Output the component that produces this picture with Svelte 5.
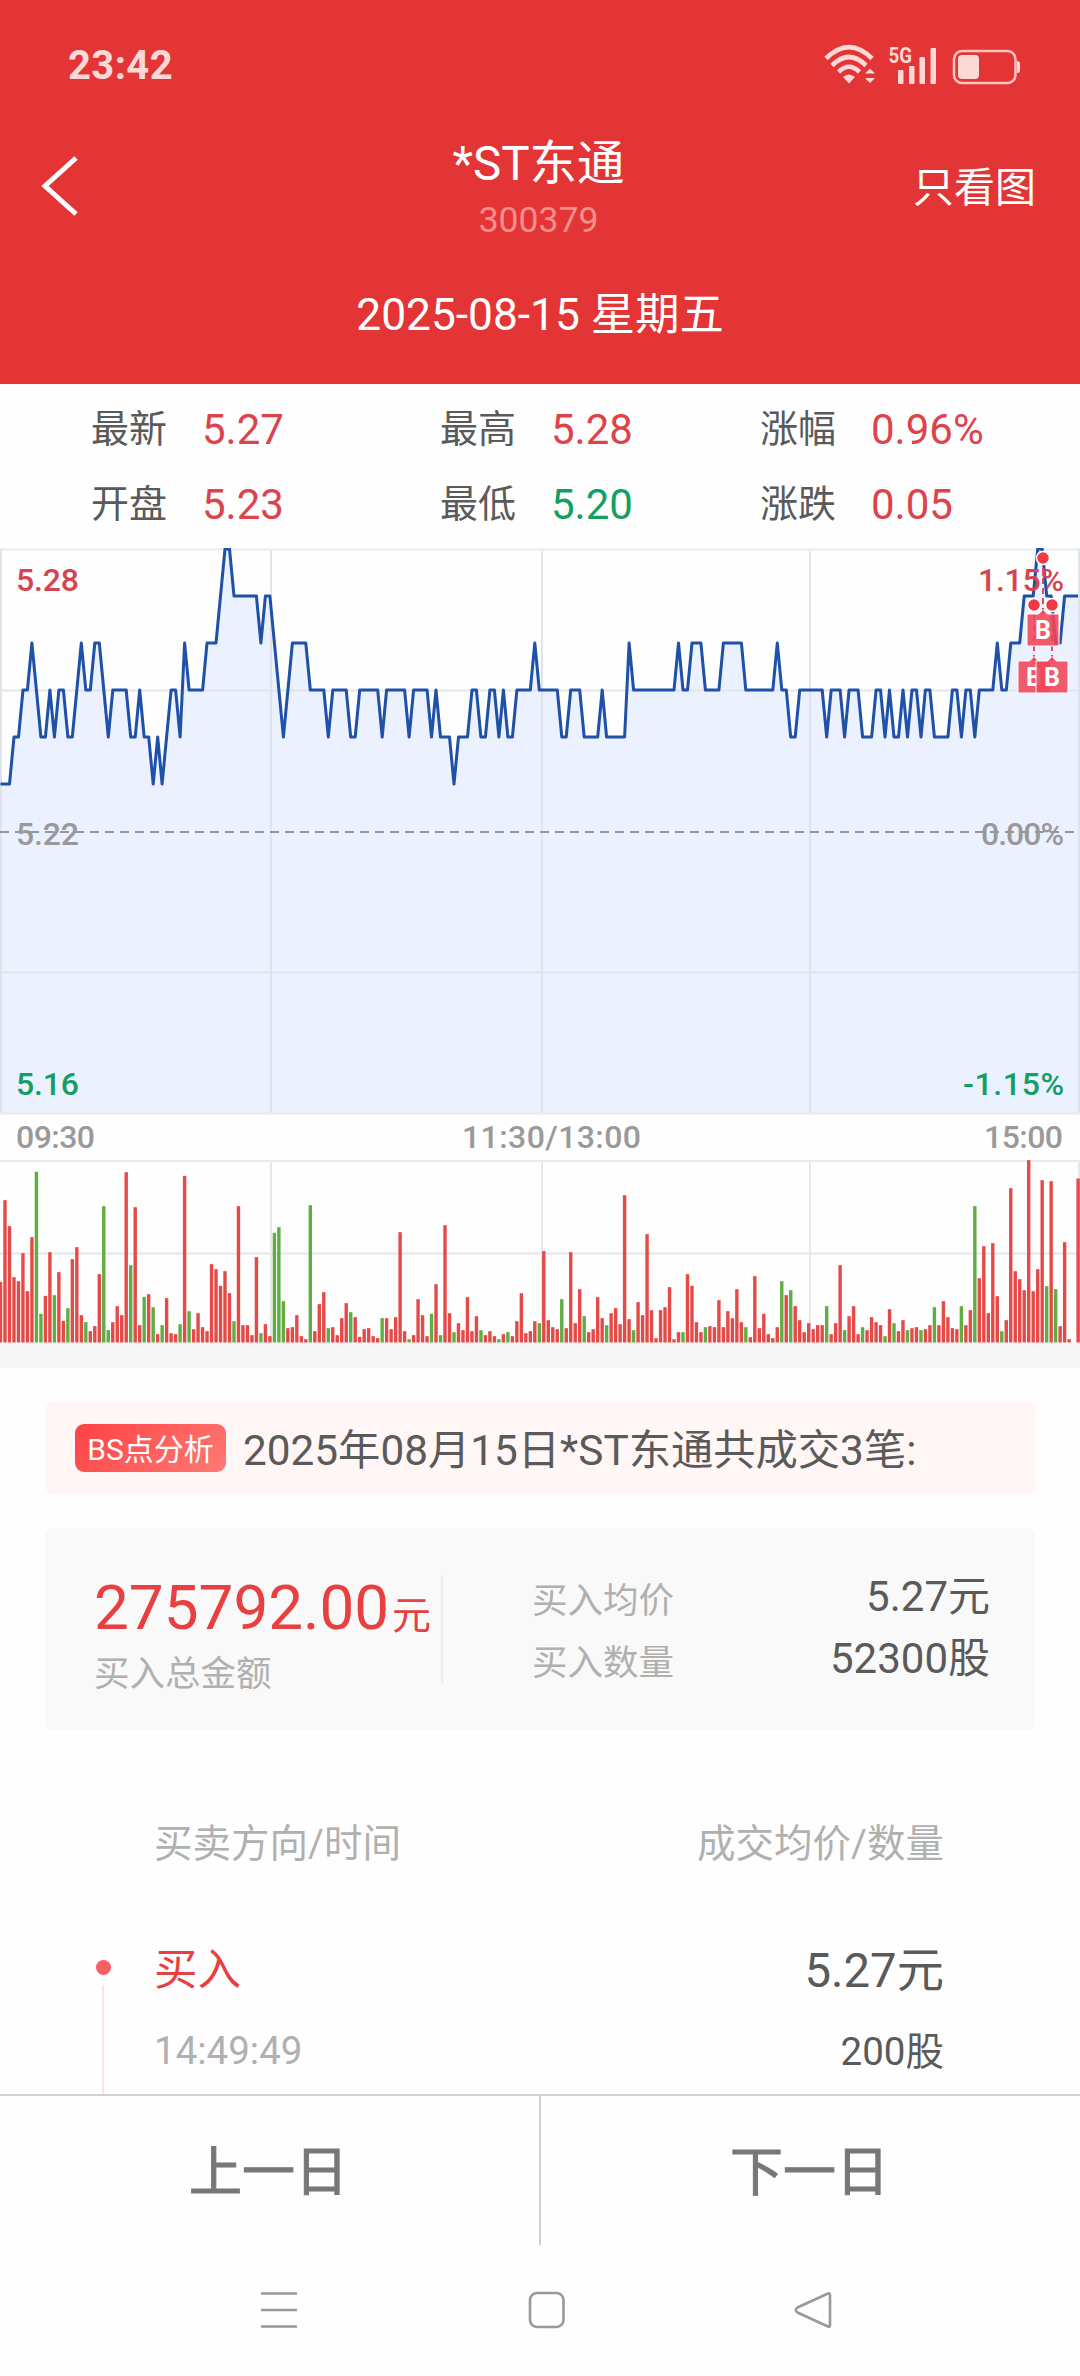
<script lang="ts">
  const stats = [
    { label: "最新", value: "5.27" },
    { label: "最高", value: "5.28" },
    { label: "涨幅", value: "0.96%" },
    { label: "开盘", value: "5.23" },
    { label: "最低", value: "5.20", down: true },
    { label: "涨跌", value: "0.05" },
  ];

  // turning points of the price line: [minute, last digit of 5.2x]
  const turns = [
    [0, 3], [2, 3], [3, 4], [4, 4], [5, 5], [6, 5], [7, 6], [9, 4], [10, 4], [11, 5],
    [12, 4], [13, 5], [14, 5], [15, 4], [16, 4], [18, 6], [19, 5], [20, 5], [21, 6], [22, 6],
    [24, 4], [25, 5], [28, 5], [29, 4], [30, 4], [31, 5], [32, 4], [33, 4], [34, 3], [35, 4],
    [36, 3], [38, 5], [39, 5], [40, 4], [41, 6], [42, 5], [45, 5], [46, 6], [48, 6], [50, 8],
    [51, 8], [52, 7], [57, 7], [58, 6], [59, 7], [60, 7], [63, 4], [65, 6], [68, 6], [69, 5],
    [72, 5], [73, 4], [74, 5], [77, 5], [78, 4], [79, 4], [80, 5], [84, 5], [85, 4], [86, 5],
    [90, 5], [91, 4], [92, 5], [95, 5], [96, 4], [97, 5], [98, 4], [100, 4], [101, 3], [102, 4],
    [104, 4], [105, 5], [106, 5], [107, 4], [108, 4], [109, 5], [110, 5], [111, 4], [112, 5], [113, 4],
    [114, 4], [115, 5], [118, 5], [119, 6], [120, 5], [124, 5], [125, 4], [126, 4], [127, 5], [129, 5],
    [130, 4], [133, 4], [134, 5], [135, 4], [139, 4], [140, 6], [141, 5], [150, 5], [151, 6], [152, 5],
    [153, 5], [154, 6], [156, 6], [157, 5], [160, 5], [161, 6], [165, 6], [166, 5], [172, 5], [173, 6],
    [174, 5], [175, 5], [176, 4], [177, 4], [178, 5], [183, 5], [184, 4], [185, 5], [187, 5], [188, 4],
    [189, 5], [191, 5], [192, 4], [194, 4], [195, 5], [196, 5], [197, 4], [198, 5], [199, 4], [200, 4],
    [201, 5], [202, 4], [203, 5], [204, 5], [205, 4], [206, 5], [207, 5], [208, 4], [211, 4], [212, 5],
    [213, 5], [214, 4], [215, 5], [216, 5], [217, 4], [218, 5], [221, 5], [222, 6], [223, 5], [224, 5],
    [225, 6], [227, 6], [228, 7], [230, 7], [231, 8], [232, 8], [233, 7], [234, 7], [235, 6], [236, 6],
    [237, 7], [240, 7],
  ];

  // volume per minute, negative when the price ticked down
  const volumes = [
    182, 427, 349, 196, 184, 268, 154, 316, -512, -86, 140, 271, -142, 211, 65, -103, 250, 286, 82, -61,
    34, 49, 205, -409, -37, 61, 109, 82, 511, -232, 406, 52, -137, 145, -106, 25, -52, 133, 28, 25,
    -55, 500, -94, 40, 88, 46, 34, 235, 220, 170, 214, 148, -64, 409, 52, 52, 22, 256, -28, 55,
    19, -329, -346, -124, 43, 46, 82, 19, 10, -412, 34, 115, 151, -43, 46, 22, 73, 118, -91, 76,
    17, 40, 43, 19, 13, -73, 73, 40, 76, 331, 34, -10, 22, 130, 82, 19, -86, 175, -22, 352,
    88, -31, 58, 37, 136, 34, 79, -37, 22, 34, 19, -10, 25, -31, 19, 64, 148, 28, 34, 64,
    -58, 274, 67, 46, 40, -130, 43, 271, 58, 160, -79, 31, 40, 136, 73, -52, 88, 103, 55, 442,
    70, -37, 121, 82, 325, 97, 13, 97, 106, 166, 10, 31, -31, 205, 170, 61, 31, -46, 49, 46,
    127, 46, 94, 73, 160, 61, -46, 16, 199, 43, 86, 25, 13, 46, -184, 142, -157, 109, 67, 31,
    58, 40, 52, 52, -109, 25, 58, 232, -37, 79, 109, 25, -46, 37, 76, 61, 52, -19, 100, -58,
    34, 67, -37, 43, 46, -37, 40, 52, -106, 52, 124, 76, 43, 40, -109, 52, 97, -409, 193, 289,
    88, 298, 139, -34, 67, 463, 214, 190, 157, 547, 154, 220, 487, -169, 484, -160, 49, 301, 10, 0,
    492,
  ];

  const markers = [
    { x: 1034, y: 605 },
    { x: 1052, y: 605 },
    { x: 1043, y: 558 },
  ];

  const minuteX = (minute: number) => 0.5 + minute * 4.49;
  const priceY = (digit: number) => 1 + (8 - digit) * 47;

  const line = turns.map(([m, d]) => `${minuteX(m).toFixed(1)},${priceY(d)}`).join(" ");
  const area = `0,565 ${line} 1080,${priceY(7)} 1080,565`;
</script>

<header>
  <div class="status">
    <span class="clock">23:42</span>
    <svg width="200" height="44" viewBox="0 0 200 44" fill="#fcd8d6">
      <g fill="none" stroke="#fcd8d6" stroke-width="4.6">
        <path d="M2 15.500Q25 -7.500 48 15.500" />
        <path d="M8 22.500Q25 5.500 42 22.500" />
        <path d="M14.500 29Q25 18.500 35.500 29" />
      </g>
      <path d="M19 34Q25 29 31 34L25 40.500Z" />
      <path d="M41 30.500L46 25.500L51 30.500ZM41 35L46 40L51 35Z" />
      <text x="64.500" y="19.500" class="network" textLength="23.500" lengthAdjust="spacingAndGlyphs">5G</text>
      <rect x="74" y="27" width="5.500" height="14" rx="1" />
      <rect x="85" y="23" width="5.500" height="18" rx="1" />
      <rect x="95.500" y="14" width="5.500" height="27" rx="1" />
      <rect x="106.500" y="5" width="5.500" height="36" rx="1" />
      <rect x="130" y="8" width="61.500" height="32" rx="8" fill="none" stroke="#fcc4c0" stroke-width="2.500" />
      <rect x="134" y="12" width="21" height="24" rx="4" />
      <path d="M193 18q3 0 3 3v6q0 3 -3 3z" />
    </svg>
  </div>
  <div class="title-bar">
    <svg width="40" height="62" viewBox="0 0 40 62">
      <path d="M35 3L4 31L35 59" fill="none" stroke="#fff" stroke-width="5" />
    </svg>
    <div class="stock">
      <h1>*ST东通</h1>
      <span>300379</span>
    </div>
    <span class="only-chart">只看图</span>
  </div>
  <div class="date">2025-08-15 星期五</div>
</header>

<section class="stats">
  {#each stats as stat}
    <div class="stat">
      <span>{stat.label}</span>
      <b class:down={stat.down}>{stat.value}</b>
    </div>
  {/each}
</section>

<svg class="chart" width="1080" height="795" viewBox="0 0 1080 795">
  <polygon points={area} fill="#ebf1fe" />
  <g stroke="#dfe3ea" stroke-width="2">
    <path d="M0 1.500H1080M0 565.500H1080M0 613H1080" stroke="#e8eaec" />
    <path d="M0 142.500H1080M0 424.500H1080M0 705.500H1080" stroke="#e2e5ea" />
    <path d="M1 1V565M271 3V565M542 3V565M810 3V565M1079 1V565" />
    <path d="M271 613V794M542 613V794M810 613V794M1079 613V794" stroke="#e8e8ea" />
  </g>
  <path d="M0 284H1080" stroke="#8f98a5" stroke-width="2" stroke-dasharray="9 6" />
  <polyline points={line} fill="none" stroke="#1f51a8" stroke-width="3" stroke-linejoin="round" />

  <g class="axis">
    <text class="up" x="16" y="43" textLength="63">5.28</text>
    <text x="16" y="297" textLength="63">5.22</text>
    <text class="down" x="16" y="547" textLength="63">5.16</text>
    <text class="up" x="978" y="43" textLength="86">1.15%</text>
    <text x="981" y="297" textLength="83">0.00%</text>
    <text class="down" x="963" y="547" textLength="101">-1.15%</text>
    <text x="16" y="600" textLength="79">09:30</text>
    <text x="462" y="600" textLength="179">11:30/13:00</text>
    <text x="984" y="600" textLength="79">15:00</text>
  </g>

  {#each markers as m}
    <g transform="translate({m.x} {m.y - 548})">
      <path d="M0 10V60" stroke="#e04a5c" stroke-width="2" stroke-dasharray="6 4" />
      <circle r="6.500" fill="#ee3a45" stroke="#fff" stroke-width="1.500" />
      <path
        d="M-16 56H-4.500L0 51.500L4.500 56H16V88H-16Z"
        fill="#f04458"
        fill-opacity="0.88"
        stroke="#fff"
        stroke-width="1"
      />
      <text class="buy" y="81">B</text>
    </g>
  {/each}

  {#each volumes as volume, i}
    <rect
      x={minuteX(i) - 1.7}
      y={794.5 - Math.abs(volume) / 3}
      width="3.4"
      height={Math.abs(volume) / 3}
      fill={volume < 0 ? "#60ad43" : "#e44a48"}
    />
  {/each}
</svg>

<div class="band"></div>

<main>
  <div class="analysis">
    <span class="tag">BS点分析</span>
    <span class="headline">2025年08月15日*ST东通共成交3笔:</span>
  </div>

  <div class="summary">
    <div class="total">
      <div class="amount">275792.00<small>元</small></div>
      <div class="muted">买入总金额</div>
    </div>
    <div class="detail">
      <div><span class="muted">买入均价</span><span>5.27元</span></div>
      <div><span class="muted">买入数量</span><span>52300股</span></div>
    </div>
  </div>

  <div class="trades">
    <div class="row head"><span>买卖方向/时间</span><span>成交均价/数量</span></div>
    <div class="trade">
      <div class="timeline"><i></i></div>
      <div class="trade-body">
        <div class="row side"><span>买入</span><b>5.27元</b></div>
        <div class="row time"><span>14:49:49</span><b>200股</b></div>
      </div>
    </div>
  </div>
</main>

<footer>
  <button>上一日</button>
  <button>下一日</button>
</footer>

<nav>
  <svg width="38" height="38" viewBox="0 0 38 38">
    <path d="M1 2.500H37M1 19H37M1 35.500H37" />
  </svg>
  <svg width="38" height="38" viewBox="0 0 38 38">
    <rect x="3" y="2" width="33.500" height="34" rx="7" />
  </svg>
  <svg width="38" height="38" viewBox="0 0 38 38">
    <path d="M34 2.500Q36 2 36 4V34Q36 36.500 34 35.500L3.500 21.500Q0 19 3.500 16.500Z" />
  </svg>
</nav>

<style>
  :global(body) {
    width: 1080px;
    background: #fefefe;
    font-family: Roboto, "Noto Sans CJK SC", sans-serif;
    color: #5a5a5a;
  }

  header {
    height: 384px;
    background: #e33536;
    color: #fff;
  }

  .status {
    display: flex;
    justify-content: space-between;
    align-items: center;
    height: 130px;
    padding: 0 56px 0 68px;
    box-sizing: border-box;
  }

  .clock {
    font-size: 40px;
    font-weight: 700;
    letter-spacing: 0.4px;
    color: #fcd8d6;
  }

  .network {
    font-size: 22.5px;
    font-weight: 700;
  }

  .title-bar {
    display: grid;
    grid-template-columns: 200px 1fr 200px;
    align-items: center;
    height: 115px;
    margin-top: -3px;
    padding: 0 44px 0 41px;
  }

  .stock {
    padding-top: 5px;
    text-align: center;
  }

  h1 {
    margin: 0;
    font-size: 47.5px;
    font-weight: 400;
    line-height: 64px;
  }

  .stock span {
    display: block;
    font-size: 35.5px;
    line-height: 49px;
    color: #f48f8b;
  }

  .only-chart {
    padding-top: 4px;
    text-align: right;
    font-size: 41px;
    line-height: 60px;
  }

  .date {
    height: 142px;
    line-height: 146px;
    text-align: center;
    font-size: 44.3px;
  }

  .stats {
    display: grid;
    grid-template-columns: 349px 320px 1fr;
    grid-auto-rows: 75px;
    height: 165px;
    padding: 8px 0 0 91px;
    box-sizing: border-box;
  }

  .stat {
    display: flex;
    align-items: center;
    gap: 35px;
    font-size: 38px;
  }

  .stat span {
    padding-bottom: 8px;
  }

  .stat b {
    font-size: 42px;
    font-weight: 400;
    color: #dd434b;
  }

  .stat b.down {
    color: #149e62;
  }

  .chart {
    display: block;
    margin-top: -1px;
  }

  .axis {
    font-size: 32px;
    font-weight: 500;
    fill: #999;
  }

  .axis .up {
    fill: #d5454f;
  }

  .axis .down {
    fill: #149e62;
  }

  .buy {
    font-size: 25px;
    font-weight: 700;
    fill: #fff;
    text-anchor: middle;
  }

  .band {
    height: 25px;
    background: #f6f6f6;
  }

  main {
    height: 726px;
    padding: 34px 45px 0;
    box-sizing: border-box;
    overflow: hidden;
  }

  .analysis {
    display: flex;
    align-items: center;
    gap: 17px;
    height: 92px;
    padding-left: 30px;
    border-radius: 8px;
    background: #fff6f5;
    font-size: 42.3px;
    white-space: nowrap;
  }

  .tag {
    width: 151px;
    height: 48px;
    border-radius: 9px;
    background: linear-gradient(135deg, #ff4245, #ff7a73);
    color: #fff;
    font-size: 30px;
    line-height: 51px;
    text-align: center;
  }

  .headline {
    padding-bottom: 4px;
  }

  .summary {
    display: flex;
    height: 202px;
    margin-top: 34px;
    padding: 47px 45px 47px 49px;
    box-sizing: border-box;
    border-radius: 8px;
    background: #f9f9f9;
  }

  .total {
    width: 347px;
    border-right: 2px solid #ececec;
  }

  .amount {
    font-size: 62px;
    line-height: 66px;
    color: #e83f41;
    white-space: nowrap;
  }

  .amount small {
    margin-left: 3px;
    font-size: 39px;
  }

  .muted {
    font-size: 35.5px;
    color: #b0b0b0;
  }

  .total .muted {
    line-height: 50px;
  }

  .detail {
    flex: 1;
    padding-left: 89px;
    margin-top: -9px;
  }

  .detail div {
    display: flex;
    justify-content: space-between;
    height: 61.5px;
    font-size: 42px;
    line-height: 61px;
  }

  .detail .muted {
    padding-top: 5px;
  }

  .trades {
    padding: 85px 91px 0 51px;
  }

  .row {
    display: flex;
    justify-content: space-between;
  }

  .row b {
    font-weight: 400;
  }

  .head {
    padding-left: 58px;
    font-size: 38.5px;
    line-height: 58px;
    color: #b0b0b0;
  }

  .trade {
    display: flex;
    margin-top: 62px;
  }

  .timeline {
    width: 58px;
    height: 170px;
    padding-top: 25px;
    background: linear-gradient(#fbe3e3, #fbe3e3) 6px 50px / 2px 100% no-repeat;
  }

  .timeline i {
    display: block;
    width: 15px;
    height: 15px;
    border-radius: 50%;
    background: #f95f60;
  }

  .trade-body {
    flex: 1;
  }

  .side {
    height: 62px;
    align-items: center;
    font-size: 43.5px;
    color: #e8403f;
  }

  .side b {
    font-size: 47.3px;
    color: #5a5a5a;
  }

  .time {
    height: 106px;
    align-items: center;
    font-size: 38.5px;
    color: #b0b0b0;
  }

  .time b {
    padding-bottom: 4px;
    color: #5a5a5a;
  }

  footer {
    display: flex;
    height: 149px;
    border-top: 2px solid #d2d0d1;
  }

  button {
    flex: 1;
    padding: 0 2px 6px 0;
    border: 0;
    background: none;
    font: inherit;
    font-size: 53px;
    color: #777;
    -webkit-text-stroke: 1px #777;
  }

  button + button {
    border-left: 2px solid #cfcfcf;
  }

  nav {
    display: flex;
    gap: 229px;
    height: 131px;
    padding: 46px 0 0 260px;
    box-sizing: border-box;
  }

  nav svg {
    fill: none;
    stroke: #999;
    stroke-width: 2.6px;
  }
</style>
